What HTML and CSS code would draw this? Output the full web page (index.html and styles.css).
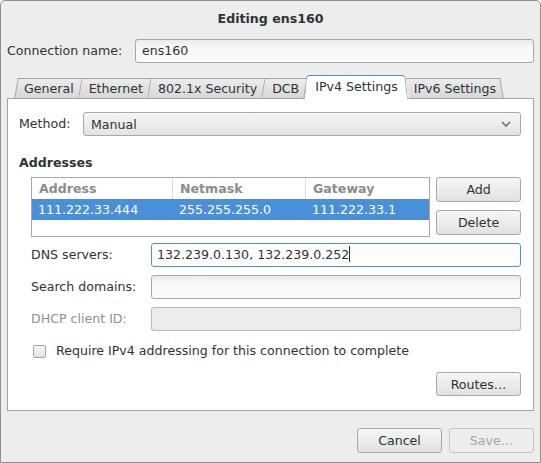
FILE: index.html
```html
<!DOCTYPE html>
<html>
<head>
<meta charset="utf-8">
<link rel="stylesheet" href="styles.css">
</head>
<body>
<div class="window">
  <div class="titlebar">Editing ens160</div>
  <div class="conn-row">
    <span class="label conn-label">Connection name:</span>
    <div class="entry conn-entry">ens160</div>
  </div>
  <div class="notebook">
    <div class="tabs">
      <div class="tab before first">General</div>
      <div class="tab before">Ethernet</div>
      <div class="tab before">802.1x Security</div>
      <div class="tab before">DCB</div>
      <div class="tab active"><span class="tab-l"></span><span class="tab-r"></span><span class="tab-text">IPv4 Settings</span></div>
      <div class="tab after">IPv6 Settings</div>
    </div>
    <div class="page">
      <div class="method-row">
        <span class="label method-label">Method:</span>
        <div class="combo">
          <span>Manual</span>
          <svg class="chev" width="10" height="6" viewBox="0 0 10 6"><path d="M1 1 L5 5 L9 1" fill="none" stroke="#6a6a6a" stroke-width="1.5"/></svg>
        </div>
      </div>
      <div class="heading">Addresses</div>
      <div class="addr-area">
        <div class="table">
          <div class="trow thead">
            <div class="cell c1">Address</div>
            <div class="cell c2">Netmask</div>
            <div class="cell c3">Gateway</div>
          </div>
          <div class="trow selected">
            <div class="cell c1">111.222.33.444</div>
            <div class="cell c2">255.255.255.0</div>
            <div class="cell c3">111.222.33.1</div>
          </div>
        </div>
        <div class="side-buttons">
          <div class="button">Add</div>
          <div class="button">Delete</div>
        </div>
      </div>
      <div class="form">
        <span class="label">DNS servers:</span>
        <div class="entry focused">132.239.0.130, 132.239.0.252<span class="caret"></span></div>
        <span class="label">Search domains:</span>
        <div class="entry"></div>
        <span class="label dim">DHCP client ID:</span>
        <div class="entry disabled"></div>
      </div>
      <div class="check-row">
        <span class="checkbox"></span>
        <span class="label">Require IPv4 addressing for this connection to complete</span>
      </div>
      <div class="routes-row">
        <div class="button">Routes…</div>
      </div>
    </div>
  </div>
  <div class="actions">
    <div class="button">Cancel</div>
    <div class="button insensitive">Save…</div>
  </div>
</div>
</body>
</html>
```
FILE: styles.css
```css
* { box-sizing: border-box; }
html, body { margin: 0; padding: 0; background: #ffffff; }
body {
  font-family: "DejaVu Sans", sans-serif;
  font-size: 12.6px;
  color: #2e3436;
}
.window {
  width: 541px;
  height: 463px;
  border: 1px solid #8f8f8f;
  border-radius: 5px 5px 0 0;
  background: #ededed;
  display: flex;
  flex-direction: column;
}
.titlebar {
  height: 38px;
  display: flex;
  align-items: center;
  justify-content: center;
  font-weight: bold;
  padding-bottom: 3px;
}
.label { white-space: nowrap; line-height: 16px; }
.label.dim { color: #8e9192; }
.conn-row {
  display: flex;
  align-items: center;
  padding: 0 6px;
}
.conn-label { width: 128px; }
.entry {
  height: 24px;
  border: 1px solid #a8a8a8;
  border-radius: 3px;
  background: linear-gradient(to bottom, #ebebeb, #f9f9f9 40%, #fbfbfb);
  padding-left: 6px;
  line-height: 22px;
  white-space: nowrap;
}
.conn-entry { flex: 1; }
.entry.focused {
  border-color: #4a90d9;
  background: #ffffff;
  padding-left: 5px;
}
.entry.disabled {
  background: #ececec;
  border-color: #b8b8b8;
}
.caret {
  display: inline-block;
  width: 1px;
  height: 16px;
  background: #2e3436;
  vertical-align: -3px;
}
.notebook {
  margin: 12px 6px 0 6px;
  height: 336px;
  display: flex;
  flex-direction: column;
}
.tabs {
  display: flex;
  align-items: flex-end;
  height: 24px;
  padding-left: 9px;
  margin-bottom: -1px;
  position: relative;
  z-index: 1;
}
.tab {
  position: relative;
  z-index: 0;
  height: 20px;
  line-height: 21px;
  margin-bottom: 1px;
  padding: 0 7px 0 8px;
  white-space: nowrap;
}
.tab::before {
  content: "";
  position: absolute;
  inset: 0;
  border: 1px solid #a4a4a4;
  border-bottom: none;
  background: linear-gradient(to bottom, #ececec, #d7d7d7);
  z-index: -1;
}
.tab.before::before { transform: skewX(-10deg); border-left: none; }
.tab.before.first::before { border-left: 1px solid #a4a4a4; }
.tab.after { padding: 0 6px 0 6px; }
.tab.after::before { transform: skewX(10deg); border-left: none; }
.tab.active {
  height: 24px;
  line-height: 24px;
  margin-bottom: 0;
  margin-left: -2px;
  z-index: 2;
  padding: 0 10px 0 11px;
}
.tab.active::before { display: none; }
.tab-l, .tab-r {
  position: absolute;
  top: 0;
  bottom: 0;
  width: 55%;
  background: #ffffff;
  border-top: 1px solid #4a90d9;
  z-index: -1;
}
.tab-l {
  left: 0;
  border-left: 1px solid #a4a4a4;
  border-top-left-radius: 4px;
  transform: skewX(-5deg);
  transform-origin: bottom left;
}
.tab-r {
  right: 0;
  border-right: 1px solid #a4a4a4;
  border-top-right-radius: 4px;
  transform: skewX(6deg);
  transform-origin: bottom right;
}
.tab-text { position: relative; }
.page {
  flex: 1;
  background: #ffffff;
  border: 1px solid #a4a4a4;
  padding: 13px 12px 0 11px;
  display: flex;
  flex-direction: column;
}
.method-row {
  display: flex;
  align-items: center;
}
.method-label { width: 64px; }
.combo {
  flex: 1;
  height: 24px;
  border: 1px solid #a8a8a8;
  border-radius: 3px;
  background: linear-gradient(to bottom, #f5f5f5, #e3e3e3);
  display: flex;
  align-items: center;
  justify-content: space-between;
  padding: 0 9px 0 7px;
}
.heading {
  font-weight: bold;
  line-height: 16px;
  margin-top: 19px;
}
.addr-area {
  margin-top: 6px;
  margin-left: 12px;
  display: flex;
  gap: 6px;
}
.table {
  width: 400px;
  height: 60px;
  border: 1px solid #a8a8a8;
  background: #ffffff;
}
.trow {
  display: flex;
  height: 21px;
  line-height: 21px;
}
.thead { font-weight: bold; color: #8b8b8b; }
.thead .cell + .cell { border-left: 1px solid #dcdcdc; }
.thead .cell { padding-left: 7px; }
.selected { background: #4a90d9; color: #ffffff; }
.selected .cell { padding-left: 6px; }
.selected .cell + .cell { padding-left: 7px; }
.cell { white-space: nowrap; }
.c1 { width: 140px; }
.c2 { width: 133px; }
.c3 { flex: 1; }
.side-buttons {
  display: flex;
  flex-direction: column;
  gap: 8px;
  width: 85px;
}
.button {
  height: 25px;
  border: 1px solid #a8a8a8;
  border-radius: 3px;
  background: linear-gradient(to bottom, #f6f6f6, #e1e1e1);
  display: flex;
  align-items: center;
  justify-content: center;
  white-space: nowrap;
}
.button.insensitive {
  background: #ededed;
  border-color: #c4c4c4;
  color: #a6a8a8;
}
.form {
  margin-top: 6px;
  margin-left: 12px;
  display: grid;
  grid-template-columns: 120px 1fr;
  row-gap: 8px;
  align-items: center;
}
.check-row {
  margin-top: 12px;
  margin-left: 14px;
  display: flex;
  align-items: center;
  gap: 10px;
}
.checkbox {
  width: 13px;
  height: 13px;
  border: 1px solid #a4a4a4;
  border-radius: 2px;
  background: linear-gradient(to bottom, #f6f6f6, #e3e3e3);
}
.routes-row {
  margin-top: 13px;
  display: flex;
  justify-content: flex-end;
}
.routes-row .button { width: 85px; height: 24px; }
.actions {
  margin-top: 17px;
  padding: 0 6px;
  display: flex;
  justify-content: flex-end;
  gap: 7px;
}
.actions .button { width: 85px; }
```
